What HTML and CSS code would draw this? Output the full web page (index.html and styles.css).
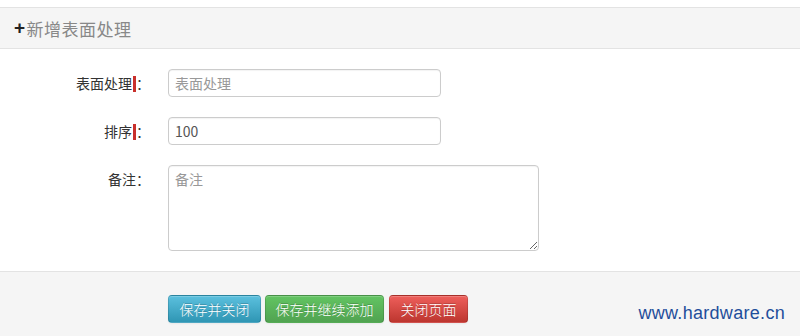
FILE: index.html
```html
<!DOCTYPE html>
<html lang="zh-CN">
<head>
    <meta charset="UTF-8">
    <meta name="viewport" content="width=device-width, initial-scale=1.0">
    <title>新增表面处理</title>
    <link rel="stylesheet" href="styles.css">
</head>
<body>
    <div class="page">
        <header class="panel-head">
            <span class="plus">+</span>新增表面处理
        </header>
        <main class="panel-body">
            <form class="form" id="surface-form">
                <div class="row">
                    <label class="label" for="name">表面处理<i class="req"></i>：</label>
                    <input class="field" type="text" id="name" placeholder="表面处理">
                </div>
                <div class="row">
                    <label class="label" for="sort">排序<i class="req"></i>：</label>
                    <input class="field" type="text" id="sort" value="100">
                </div>
                <div class="row">
                    <label class="label" for="remark">备注：</label>
                    <textarea class="field area" id="remark" placeholder="备注"></textarea>
                </div>
            </form>
        </main>
        <footer class="panel-foot">
            <button class="btn btn-info" type="button">保存并关闭</button>
            <button class="btn btn-success" type="button">保存并继续添加</button>
            <button class="btn btn-danger" type="button">关闭页面</button>
            <span class="mark">www.hardware.cn</span>
        </footer>
    </div>
</body>
</html>
```

FILE: styles.css
```css
body {
    margin: 0;
    padding: 0;
    background-color: #fff;
    font-family: "Noto Sans CJK SC", "Liberation Sans", sans-serif;
    font-size: 14px;
    color: #333;
}
.page {
    padding-top: 7px;
    height: 329px;
    display: flex;
    flex-direction: column;
}
.panel-head {
    height: 40px;
    border-top: 1px solid #e3e3e3;
    border-bottom: 1px solid #e3e3e3;
    background-color: #f5f5f5;
    display: flex;
    align-items: center;
    padding-left: 14px;
    font-size: 17px;
    color: #888;
    letter-spacing: 0.5px;
}
.plus {
    font-family: "Liberation Sans", sans-serif;
    font-weight: bold;
    font-size: 19px;
    color: #222;
    margin-right: 1px;
}
.panel-body {
    padding: 20px 0 20px 0;
    flex: 0 0 auto;
}
.form {
    display: flex;
    flex-direction: column;
    gap: 20px;
}
.row {
    display: flex;
    align-items: flex-start;
    gap: 18px;
}
.label {
    width: 150px;
    text-align: right;
    line-height: 28px;
    color: #333;
}
.req {
    display: inline-block;
    width: 3px;
    height: 16px;
    background-color: #c9302c;
    vertical-align: -3px;
    margin-left: 1px;
}
.field {
    box-sizing: border-box;
    width: 273px;
    height: 28px;
    padding: 4px 6px;
    border: 1px solid #ccc;
    border-radius: 4px;
    font-family: "Noto Sans CJK SC", "Liberation Sans", sans-serif;
    font-size: 14px;
    color: #555;
    background: #fff;
    box-shadow: inset 0 1px 1px rgba(0, 0, 0, 0.05);
}
.field::placeholder {
    color: #999;
}
.area {
    width: 371px;
    height: 86px;
    resize: vertical;
    line-height: 18px;
}
.panel-foot {
    flex: 1;
    position: relative;
    border-top: 1px solid #e3e3e3;
    background-color: #f5f5f5;
    padding: 23px 0 0 168px;
    display: flex;
    align-items: flex-start;
    gap: 4px;
}
.btn {
    height: 28px;
    padding: 0;
    white-space: nowrap;
    border: 1px solid rgba(0, 0, 0, 0.12);
    border-radius: 4px;
    color: #fff;
    font-family: "Noto Sans CJK SC", "Liberation Sans", sans-serif;
    font-size: 14px;
    font-weight: 300;
    text-shadow: 0 -1px 0 rgba(0, 0, 0, 0.2);
    box-shadow: inset 0 1px 0 rgba(255, 255, 255, 0.2), 0 1px 2px rgba(0, 0, 0, 0.05);
    cursor: pointer;
}
.btn-info {
    width: 93px;
    background: linear-gradient(#5bc0de, #2f96b4);
}
.btn-success {
    width: 119px;
    background: linear-gradient(#62c462, #51a351);
}
.btn-danger {
    width: 79px;
    margin-left: 1px;
    background: linear-gradient(#ee5f5b, #bd362f);
}
.mark {
    position: absolute;
    right: 15px;
    bottom: 12px;
    font-family: "Liberation Sans", sans-serif;
    font-size: 18px;
    color: #1f4e9b;
    letter-spacing: 0.3px;
}
```
